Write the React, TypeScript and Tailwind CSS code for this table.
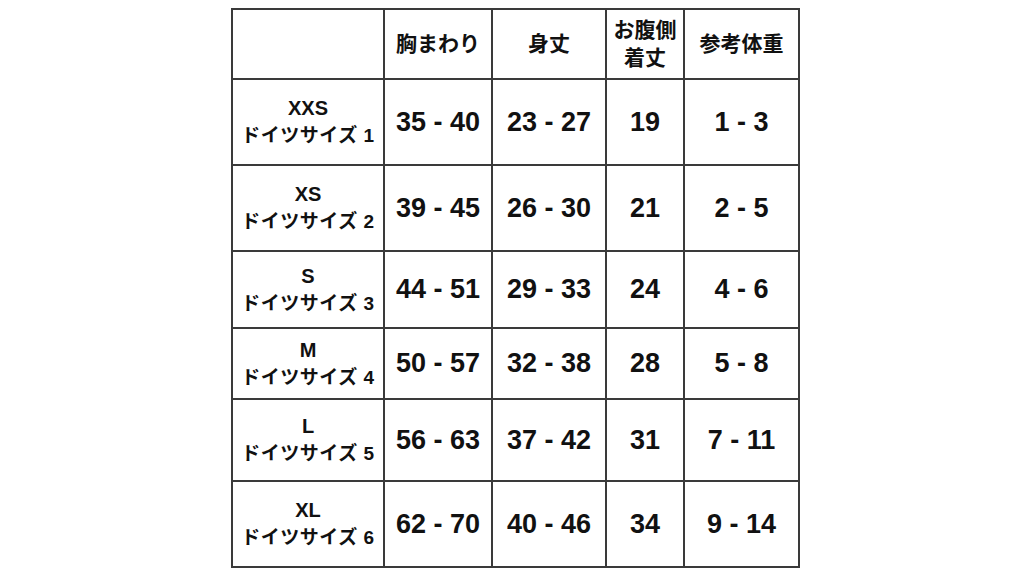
import React from "react";

const rows = [
  { size: "XXS", de: "ドイツサイズ 1", chest: "35 - 40", len: "23 - 27", belly: "19", w: "1 - 3", h: "h-[86px]" },
  { size: "XS", de: "ドイツサイズ 2", chest: "39 - 45", len: "26 - 30", belly: "21", w: "2 - 5", h: "h-[86px]" },
  { size: "S", de: "ドイツサイズ 3", chest: "44 - 51", len: "29 - 33", belly: "24", w: "4 - 6", h: "h-[77px]" },
  { size: "M", de: "ドイツサイズ 4", chest: "50 - 57", len: "32 - 38", belly: "28", w: "5 - 8", h: "h-[71px]" },
  { size: "L", de: "ドイツサイズ 5", chest: "56 - 63", len: "37 - 42", belly: "31", w: "7 - 11", h: "h-[82px]" },
  { size: "XL", de: "ドイツサイズ 6", chest: "62 - 70", len: "40 - 46", belly: "34", w: "9 - 14", h: "h-[86px]" },
];

const cell = "flex items-center justify-center text-center border-r-2 border-b-2 border-[#3a3a3a]";

export default function App() {
  return (
    <div
      className="w-[1024px] h-[576px] bg-white pt-[8px] pl-[231px] text-[#111] font-bold"
      style={{ fontFamily: '"Liberation Sans", "Noto Sans CJK JP", sans-serif' }}
    >
      <div className="grid grid-cols-[152px_108px_114px_78px_115px] w-max border-l-2 border-t-2 border-[#3a3a3a]">
        <div className={`${cell} h-[70px]`}></div>
        <div className={`${cell} h-[70px] text-[21px]`}>胸まわり</div>
        <div className={`${cell} h-[70px] text-[21px]`}>身丈</div>
        <div className={`${cell} h-[70px] text-[21px] leading-[28px] flex-col`}>
          <span>お腹側</span>
          <span>着丈</span>
        </div>
        <div className={`${cell} h-[70px] text-[21px]`}>参考体重</div>
        {rows.map((r) => (
          <React.Fragment key={r.size}>
            <div className={`${cell} ${r.h} flex-col leading-[28px]`}>
              <span className="text-[20px]">{r.size}</span>
              <span className="text-[19px] tracking-[0.5px]">{r.de}</span>
            </div>
            <div className={`${cell} ${r.h} text-[27px]`}>{r.chest}</div>
            <div className={`${cell} ${r.h} text-[27px]`}>{r.len}</div>
            <div className={`${cell} ${r.h} text-[27px]`}>{r.belly}</div>
            <div className={`${cell} ${r.h} text-[27px]`}>{r.w}</div>
          </React.Fragment>
        ))}
      </div>
    </div>
  );
}
